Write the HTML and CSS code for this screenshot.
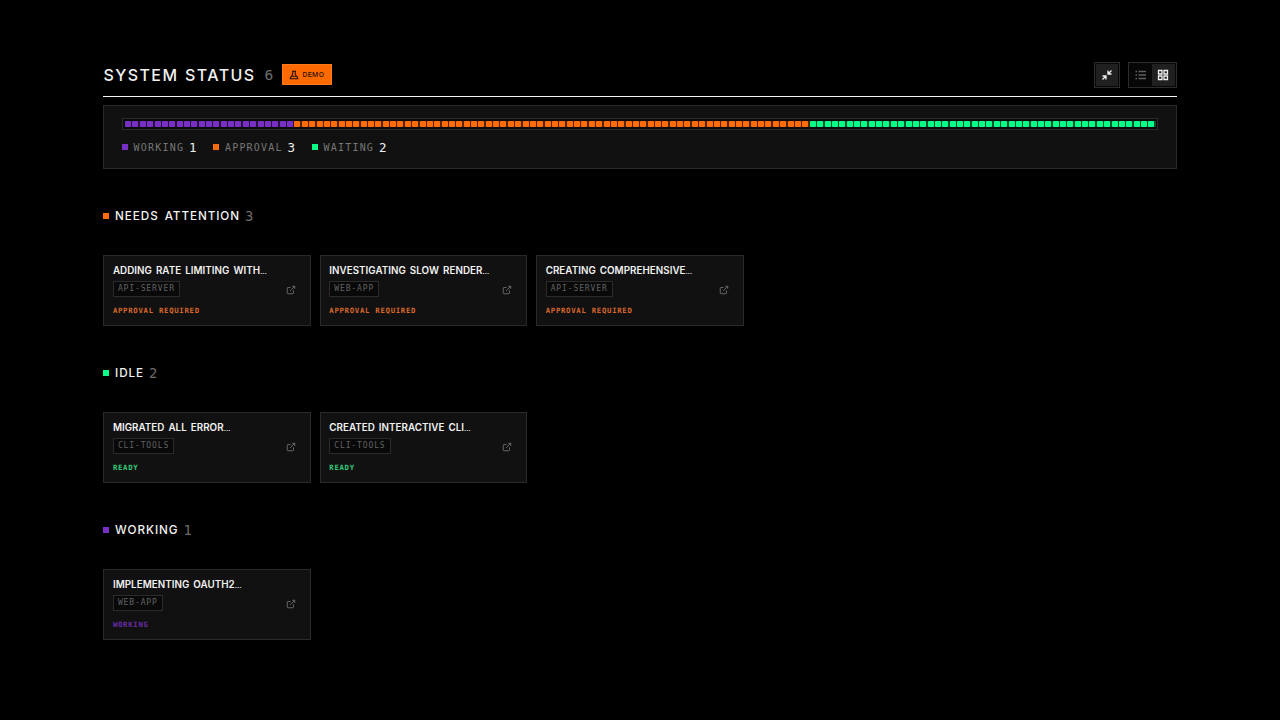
FILE: index.html
```html
<!DOCTYPE html>
<html lang="en">
<head>
<meta charset="utf-8">
<title>System Status</title>
<link rel="stylesheet" href="styles.css">
</head>
<body>
<svg class="sprite" aria-hidden="true">
  <symbol id="external" viewBox="0 0 24 24"><path d="M15 3h6v6M10 14 21 3M18 13v6a2 2 0 0 1-2 2H5a2 2 0 0 1-2-2V8a2 2 0 0 1 2-2h6"/></symbol>
</svg>
<main class="page">
  <header class="header">
    <h1 class="title">SYSTEM STATUS</h1>
    <span class="total">6</span>
    <span class="demo">
      <svg class="icon flask" viewBox="0 0 24 24"><path d="M9 3v7L3 19v2h18v-2l-6-9V3M7 3h10M7 15h10"/></svg>
      <span class="demo-text">DEMO</span>
    </span>
    <div class="tools">
      <div class="toolbox single"><span class="tool active"><svg class="icon" viewBox="0 0 24 24"><path d="M3 14h7v7M21 10h-7V3M14 10l7-7M3 21l7-7"/></svg></span></div>
      <div class="toolbox">
        <span class="tool dim"><svg class="icon" viewBox="0 0 24 24"><path d="M7 5h15M7 12h15M7 19h15M1 5h3M1 12h3M1 19h3"/></svg></span>
        <span class="tool active"><svg class="icon" viewBox="0 0 24 24"><path d="M3 3h7v7H3zM14 3h7v7h-7zM14 14h7v7h-7zM3 14h7v7H3z"/></svg></span>
      </div>
    </div>
  </header>

  <section class="panel">
    <div class="meter">
      <div class="run purple" data-cells="23"></div>
      <div class="run orange" data-cells="70"></div>
      <div class="run green" data-cells="47"></div>
    </div>
    <div class="legend">
      <div class="entry"><i class="dot purple"></i><span class="name">WORKING</span><b class="num">1</b></div>
      <div class="entry"><i class="dot orange"></i><span class="name">APPROVAL</span><b class="num">3</b></div>
      <div class="entry"><i class="dot green"></i><span class="name">WAITING</span><b class="num">2</b></div>
    </div>
  </section>

  <section class="group">
    <h2 class="heading"><i class="dot orange"></i><span class="label">NEEDS ATTENTION</span><span class="count">3</span></h2>
    <div class="cards">
      <article class="card"><div class="name-line">ADDING RATE LIMITING WITH<span class="more">…</span></div><span class="tag">API-SERVER</span><div class="state orange">APPROVAL REQUIRED</div><svg class="icon open"><use href="#external"/></svg></article>
      <article class="card"><div class="name-line">INVESTIGATING SLOW RENDER<span class="more">…</span></div><span class="tag">WEB-APP</span><div class="state orange">APPROVAL REQUIRED</div><svg class="icon open"><use href="#external"/></svg></article>
      <article class="card"><div class="name-line">CREATING COMPREHENSIVE<span class="more">…</span></div><span class="tag">API-SERVER</span><div class="state orange">APPROVAL REQUIRED</div><svg class="icon open"><use href="#external"/></svg></article>
    </div>
  </section>

  <section class="group">
    <h2 class="heading"><i class="dot green"></i><span class="label">IDLE</span><span class="count">2</span></h2>
    <div class="cards">
      <article class="card"><div class="name-line">MIGRATED ALL ERROR<span class="more">…</span></div><span class="tag">CLI-TOOLS</span><div class="state green">READY</div><svg class="icon open"><use href="#external"/></svg></article>
      <article class="card"><div class="name-line">CREATED INTERACTIVE CLI<span class="more">…</span></div><span class="tag">CLI-TOOLS</span><div class="state green">READY</div><svg class="icon open"><use href="#external"/></svg></article>
    </div>
  </section>

  <section class="group">
    <h2 class="heading"><i class="dot purple"></i><span class="label">WORKING</span><span class="count">1</span></h2>
    <div class="cards">
      <article class="card"><div class="name-line">IMPLEMENTING OAUTH2<span class="more">…</span></div><span class="tag">WEB-APP</span><div class="state purple">WORKING</div><svg class="icon open"><use href="#external"/></svg></article>
    </div>
  </section>
</main>
<script src="meter.js"></script>
</body>
</html>
```

FILE: styles.css
```css
* { box-sizing: border-box; }
body { margin: 0; background: #000; color: #f2f2f2; font-family: Inter, "Liberation Sans", sans-serif; }
.sprite { display: none; }
.page { width: 1073.200px; margin-left: 103.400px; padding-top: 54px; }
.icon { fill: none; stroke: currentColor; stroke-width: 2; flex: none; }

.header { height: 43px; display: flex; align-items: center; border-bottom: 1px solid #f4f4f4; }
.title { margin: 0; width: 161px; font-size: 16px; line-height: 20px; font-weight: 500; letter-spacing: 1.420px; word-spacing: 1px; white-space: nowrap; }
.total { width: 18px; font: 14.500px/20px "DejaVu Sans Mono", monospace; color: #707070; }
.demo { width: 50px; height: 21px; margin-top: -1px; display: flex; align-items: center; gap: 3px; padding-left: 6px; background: #ff6a00; border: 1px solid #ff7a1c; color: #1c0d00; }
.flask { width: 10px; height: 10px; stroke-width: 2.500; }
.demo-text { font-size: 6.800px; font-weight: 500; letter-spacing: .35px; }
.tools { margin-left: auto; display: flex; gap: 8px; }
.toolbox { display: flex; height: 26px; padding: 1px; border: 1px solid #2c2c2c; background: #070707; }
.tool { width: 22.500px; display: flex; align-items: center; justify-content: center; }
.single .tool { width: 22px; }
.tool .icon { width: 12px; height: 12px; stroke-width: 2.600; }
.tool.active { background: #202020; color: #f0f0f0; }
.tool.dim { color: #606060; }

.panel { margin-top: 8px; height: 64px; padding: 12px 17.700px 0; background: #111; border: 1px solid #292929; }
.meter { height: 12px; display: flex; padding: 2px 1px 2px 2px; border: 1px solid #2b2b2b; background: #0b0b0b; }
.run { display: flex; height: 6px; }
.run.purple { flex: 23; background: #261039; }
.run.orange { flex: 70; background: #552500; }
.run.green { flex: 47; background: #04512e; }
.cell { flex: 1; }
.cell::before { content: ""; display: block; width: 6px; height: 6px; border-radius: 1px; }
.purple .cell::before { background: #7730c3; }
.orange .cell::before { background: #ff6c0d; }
.green .cell::before { background: #09fc88; }

.dot { display: block; width: 6px; height: 6px; flex: none; }
.dot.purple { background: #7730c3; }
.dot.orange { background: #ff6c0d; }
.dot.green { background: #09fc88; }
.legend { display: flex; gap: 17px; margin-top: 9px; }
.entry { display: flex; align-items: center; height: 16px; font-family: "DejaVu Sans Mono", monospace; }
.name { margin-left: 5.500px; font-size: 10px; letter-spacing: 1.200px; color: #777; }
.num { margin-left: 4.800px; font-size: 12.500px; font-weight: 400; color: #f2f2f2; }

.group { height: 157px; }
.panel + .group { margin-top: 34px; }
.heading { margin: 0; height: 52px; padding-top: 3px; display: flex; align-items: flex-start; font-size: 11.700px; line-height: 20px; font-weight: 500; }
.heading .dot { margin-top: 7px; }
.label { margin-left: 5.700px; letter-spacing: .920px; word-spacing: 2px; }
.count { margin-left: 5px; font: 13.800px/20px "DejaVu Sans Mono", monospace; color: #6c6c6c; }
.cards { display: grid; grid-template-columns: repeat(5, 1fr); gap: 8.800px; }
.card { position: relative; height: 71px; padding: 8px 8.500px; background: #111; border: 1px solid #2a2a2a; }
.name-line { font-size: 9.800px; line-height: 13px; font-weight: 600; letter-spacing: .04px; word-spacing: 1.500px; white-space: nowrap; }
.more { font-size: 7px; }
.tag { display: block; width: fit-content; height: 16px; margin-top: 3px; padding: 0 4px; border: 1px solid #2b2b2b; background: #090909; color: #626262; font: 8px/14px "DejaVu Sans Mono", monospace; letter-spacing: .88px; }
.state { margin-top: 8px; font: bold 7.300px/12px "DejaVu Sans Mono", monospace; letter-spacing: .72px; }
.state.orange { color: #d9682b; }
.state.green { color: #35c978; }
.state.purple { color: #6a2ba8; }
.open { position: absolute; right: 14px; top: 29px; width: 10px; height: 10px; color: #777; }
```

FILE: meter.js
```js
document.querySelectorAll('.run').forEach(function (run) {
  for (var i = 0; i < Number(run.dataset.cells); i++) {
    var cell = document.createElement('span');
    cell.className = 'cell';
    run.appendChild(cell);
  }
});
```
